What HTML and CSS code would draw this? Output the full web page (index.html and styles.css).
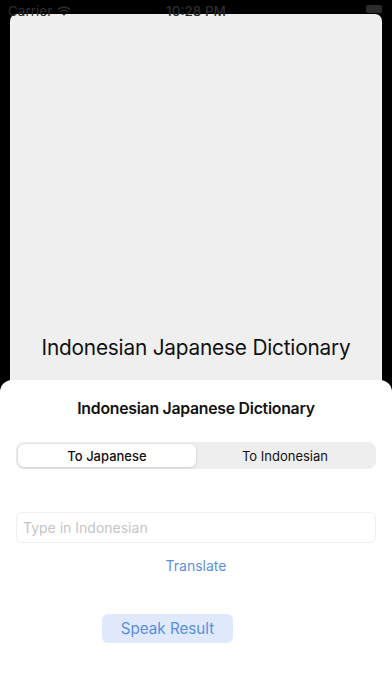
FILE: index.html
```html
<!DOCTYPE html>
<html>
<head>
<meta charset="utf-8">
<link rel="stylesheet" href="styles.css">
</head>
<body>
<div class="screen">
  <div class="status">
    <div class="status-left">
      <span>Carrier</span>
      <svg class="wifi" width="14" height="10" viewBox="0 0 14 10"><path d="M1 3.6 A8.5 8.5 0 0 1 13 3.6" fill="none" stroke="#2c2c2c" stroke-width="1.6"/><path d="M3.2 5.8 A5.3 5.3 0 0 1 10.8 5.8" fill="none" stroke="#2c2c2c" stroke-width="1.6"/><path d="M5.3 7.9 A2.3 2.3 0 0 1 8.7 7.9 L7 9.8 Z" fill="#2c2c2c"/></svg>
    </div>
    <div class="status-time">10:28 PM</div>
    <div class="status-right">
      <div class="battery"></div>
    </div>
  </div>
  <div class="back-card">
    <div class="back-title">Indonesian Japanese Dictionary</div>
  </div>
  <div class="sheet">
    <div class="sheet-title">Indonesian Japanese Dictionary</div>
    <div class="segmented">
      <div class="seg seg-active">To Japanese</div>
      <div class="seg">To Indonesian</div>
    </div>
    <div class="field">Type in Indonesian</div>
    <div class="translate">Translate</div>
    <div class="speak-row">
      <div class="speak">Speak Result</div>
    </div>
  </div>
</div>
</body>
</html>
```
FILE: styles.css
```css
html, body {
  margin: 0;
  padding: 0;
  background: #000;
}
body {
  font-family: Inter, "Liberation Sans", sans-serif;
  width: 392px;
  height: 696px;
  overflow: hidden;
}
.screen {
  position: relative;
  width: 392px;
  height: 696px;
  display: flex;
  flex-direction: column;
}
.status {
  height: 14px;
  display: flex;
  align-items: flex-start;
  justify-content: space-between;
  color: #2c2c2c;
  font-size: 13.5px;
  position: relative;
}
.status-left {
  display: flex;
  align-items: center;
  gap: 5px;
  padding-left: 8px;
  margin-top: 3px;
}
.wifi { margin-top: -1px; }
.status-time {
  position: absolute;
  left: 0;
  right: 0;
  top: 3px;
  text-align: center;
  font-weight: 500;
}
.status-right {
  padding-right: 10px;
  padding-top: 5px;
}
.battery {
  width: 16px;
  height: 8px;
  border-radius: 2px;
  background: #2c2c2c;
}
.back-card {
  margin: 0 10px;
  height: 380px;
  background: #efefef;
  border-radius: 7px 7px 0 0;
  display: flex;
  align-items: flex-end;
  justify-content: center;
}
.back-title {
  font-size: 20.8px;
  color: #111;
  padding-bottom: 34px;
  letter-spacing: -0.2px;
}
.sheet {
  position: absolute;
  left: 0;
  right: 0;
  top: 380px;
  bottom: 0;
  background: #fff;
  border-radius: 12px 12px 0 0;
  display: flex;
  flex-direction: column;
  padding: 0 16px;
}
.sheet-title {
  margin-top: 19px;
  text-align: center;
  font-size: 15.8px;
  font-weight: 600;
  color: #111;
  letter-spacing: -0.25px;
}
.segmented {
  margin-top: 24px;
  height: 27px;
  background: #eeeeef;
  border-radius: 8px;
  display: flex;
  padding: 2px;
  box-sizing: border-box;
}
.seg {
  flex: 1;
  display: flex;
  align-items: center;
  justify-content: center;
  font-size: 13px;
  color: #111;
  border-radius: 6px;
}
.seg-active {
  background: #fff;
  box-shadow: 0 1px 3px rgba(0,0,0,0.12), 0 0 0 0.5px rgba(0,0,0,0.04);
  font-weight: 500;
}
.field {
  margin-top: 43px;
  height: 31px;
  border: 1px solid #efefef;
  border-radius: 6px;
  box-sizing: border-box;
  display: flex;
  align-items: center;
  padding-left: 6px;
  font-size: 14px;
  color: #c4c4c6;
}
.translate {
  margin-top: 14px;
  text-align: center;
  font-size: 14px;
  color: #5b8fe0;
}
.speak-row {
  margin-top: 40px;
  padding-left: 86px;
  display: flex;
}
.speak {
  width: 131px;
  height: 29px;
  border-radius: 6px;
  background: #dfe9fb;
  color: #5b8de0;
  font-size: 15.2px;
  display: flex;
  align-items: center;
  justify-content: center;
}
```
